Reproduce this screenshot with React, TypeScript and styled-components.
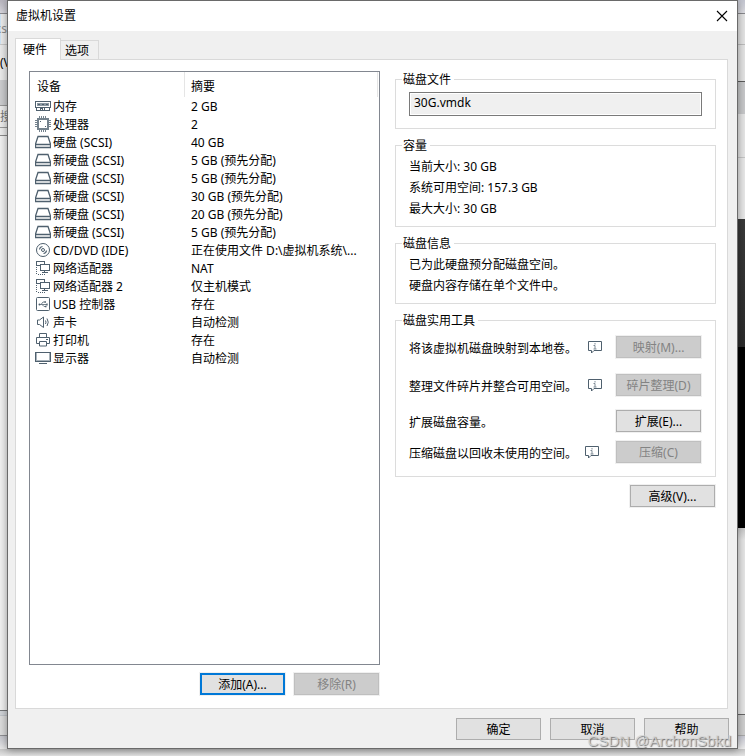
import React from "react";
import styled, { createGlobalStyle } from "styled-components";

const GlobalStyle = createGlobalStyle`
  * { box-sizing: border-box; }
  body {
    margin: 0;
    background: #f6f6f6;
    color: #000;
    font-family: "Noto Sans", "Noto Sans CJK SC", sans-serif;
    font-size: 12px;
    line-height: 16px;
  }
  button, input { font: inherit; color: inherit; }
`;

const Page = styled.div`
  position: relative;
  display: flex;
  flex-direction: column;
  min-height: 100vh;
`;

const Desktop = styled.div`
  flex: 1;
  display: flex;
`;

const Strip = styled.div`
  flex: 0 0 7px;
  display: flex;
  flex-direction: column;
  overflow: hidden;
`;

const Segment = styled.div<{ $h?: number; $bg: string; $line?: string; $ink?: string; $end?: boolean }>`
  flex: ${(p) => (p.$h ? `0 0 ${p.$h}px` : "1 1 0")};
  display: flex;
  align-items: center;
  justify-content: ${(p) => (p.$end ? "flex-end" : "flex-start")};
  overflow: hidden;
  background: ${(p) => p.$bg};
  border-bottom: ${(p) => (p.$line ? `1px solid ${p.$line}` : "0")};
  color: ${(p) => p.$ink ?? "#000"};
  white-space: nowrap;
`;

const BottomStrip = styled.div`
  height: 7px;
  background: linear-gradient(#c6c6c6, #e4e4e4);
`;

const Dialog = styled.main`
  flex: 1;
  position: relative;
  display: flex;
  flex-direction: column;
  min-width: 0;
  border: 1px solid #6a6a6a;
  background: #f0f0f0;
  box-shadow: 0 1px 8px rgba(0, 0, 0, 0.4);
`;

const TitleBar = styled.header`
  display: flex;
  align-items: center;
  justify-content: space-between;
  height: 30px;
  padding: 0 8px;
  background: #fff;
`;

const Title = styled.h1`
  margin: 0;
  font-size: 12px;
  font-weight: 400;
`;

const CloseButton = styled.button`
  display: grid;
  place-items: center;
  width: 14px;
  height: 14px;
  padding: 0;
  border: 0;
  background: none;
`;

const Tabs = styled.div`
  display: flex;
  align-items: flex-end;
  height: 28px;
  padding: 0 7px;
`;

const Tab = styled.button<{ $active?: boolean }>`
  position: relative;
  z-index: ${(p) => (p.$active ? 1 : 0)};
  width: ${(p) => (p.$active ? 46 : 38)}px;
  height: ${(p) => (p.$active ? 22 : 19)}px;
  margin-bottom: ${(p) => (p.$active ? -1 : 0)}px;
  padding: ${(p) => (p.$active ? "0 0 0 7px" : "2px 0 0 4px")};
  border: 1px solid #d9d9d9;
  border-bottom: 0;
  border-left-width: ${(p) => (p.$active ? 1 : 0)}px;
  background: ${(p) => (p.$active ? "#fff" : "#f0f0f0")};
  text-align: left;
`;

const Panel = styled.section`
  flex: 1;
  display: grid;
  grid-template-columns: 351fr 321fr;
  gap: 15px;
  margin: 0 9px 0 7px;
  padding: 11px 11px 13px 13px;
  border: 1px solid #d9d9d9;
  background: #fff;
`;

const Column = styled.div`
  display: flex;
  flex-direction: column;
  gap: 8px;
  min-width: 0;
`;

const ListBox = styled.div`
  flex: 1;
  padding-right: 1px;
  border: 1px solid #828790;
  background: #fff;
`;

const DeviceTable = styled.table`
  width: 100%;
  border-collapse: separate;
  border-spacing: 0;
  table-layout: fixed;
`;

const HeadCell = styled.th<{ $first?: boolean }>`
  width: ${(p) => (p.$first ? "155px" : "auto")};
  height: 25px;
  padding: 5px 0 0 ${(p) => (p.$first ? 7 : 6)}px;
  border-right: 1px solid #e5e5e5;
  font-weight: 400;
  text-align: left;
`;

const Cell = styled.td<{ $first?: boolean }>`
  height: 18px;
  padding: ${(p) => (p.$first ? "0 0 0 5px" : "2px 0 0 6px")};
  overflow: hidden;
  white-space: nowrap;
`;

const DeviceName = styled.div`
  display: flex;
  align-items: center;
  gap: 2px;
  height: 18px;
`;

const NameText = styled.span`
  align-self: flex-end;
`;

const Icon = styled.svg`
  flex: none;
  display: block;
  width: 16px;
  height: 16px;
  fill: none;
  stroke: #4f606e;
  stroke-width: 1;
`;

const Actions = styled.div<{ $inset?: boolean }>`
  display: flex;
  justify-content: flex-end;
  gap: 9px;
  padding-right: ${(p) => (p.$inset ? 1 : 0)}px;
`;

const PushButton = styled.button<{ $primary?: boolean }>`
  flex: none;
  width: 85px;
  height: 22px;
  padding: 2px 0 0;
  border: ${(p) => (p.$primary ? "2px solid #0078d7" : "1px solid #adadad")};
  background: #e1e1e1;
  box-shadow: 0 0 0 1px #f0f0f0;
  &:disabled {
    border-color: #bfbfbf;
    background: #ccc;
    color: #838383;
  }
`;

const Group = styled.fieldset<{ $top: number; $bottom: number }>`
  margin: 0;
  min-width: 0;
  padding: ${(p) => p.$top}px 13px ${(p) => p.$bottom}px;
  border: 1px solid #dcdcdc;
`;

const Legend = styled.legend`
  height: 16px;
  margin-left: -7px;
  padding: 0 3px 0 1px;
  line-height: 18px;
`;

const FileInput = styled.input`
  display: block;
  width: 100%;
  height: 24px;
  padding: 0 4px 4px;
  border: 1px solid #7a7a7a;
  background: #f0f0f0;
  box-shadow: inset 0 0 0 1px #fff;
  outline: 0;
`;

const Line = styled.p`
  margin: 0;
  line-height: 21px;
`;

const Tool = styled.div<{ $h: number }>`
  display: flex;
  align-items: flex-start;
  height: ${(p) => p.$h}px;
  padding-right: 1px;
`;

const ToolText = styled.span`
  line-height: 25px;
  white-space: nowrap;
`;

const InfoIcon = styled.svg<{ $gap: number }>`
  flex: none;
  width: 14px;
  height: 13px;
  margin: 5px 0 0 ${(p) => p.$gap}px;
  fill: none;
  stroke: #4f606e;
`;

const Spacer = styled.span`
  flex: 1;
`;

const Footer = styled.footer`
  padding: 9px 8px 8px;
`;

const Watermark = styled.div`
  position: absolute;
  right: 14px;
  bottom: 6px;
  color: rgba(215, 215, 215, 0.8);
  font: 15px/18px "Liberation Sans", sans-serif;
  text-shadow: 1px 1px 1px rgba(80, 80, 80, 0.75);
  pointer-events: none;
`;

const MemoryIcon = () => (
  <Icon viewBox="0 0 16 16" shapeRendering="crispEdges">
    <path d="M.5 3.5h15v6h-15zM1.5 9.5v3h13v-3M5.5 12.5v-2h2v2M9.5 12v-2" />
    <path d="M2 6.500h12" strokeWidth="3" stroke="#8b98a2" />
    <path d="M3 6.500h2M7 6.500h2M11 6.500h2" />
  </Icon>
);

const CpuIcon = () => (
  <Icon viewBox="0 0 16 16" shapeRendering="crispEdges">
    <rect x="3" y="3" width="10" height="10" strokeWidth="2" stroke="#74828d" />
    <path
      stroke="#74828d"
      d="M4.500 0v2M6.500 0v2M8.500 0v2M10.500 0v2M4.500 14v2M6.500 14v2M8.500 14v2M10.500 14v2M0 4.500h2M0 6.500h2M0 8.500h2M0 10.500h2M14 4.500h2M14 6.500h2M14 8.500h2M14 10.500h2"
    />
    <path d="M5 5.500h1M10 10.500h1" />
  </Icon>
);

const DiskIcon = () => (
  <Icon viewBox="0 0 16 16">
    <path d="M3 2.500h10l2.500 7.500v3.500H.5V10zM.5 10.500h15" strokeWidth="1.300" />
  </Icon>
);

const DiscIcon = () => (
  <Icon viewBox="0 0 16 16">
    <circle cx="8" cy="8" r="6.500" />
    <circle cx="8" cy="8" r="1.500" />
    <path d="M4.500 7.500A3.500 3.500 0 0 1 7.500 4.500M11.500 8.500A3.500 3.500 0 0 1 8.500 11.500" strokeWidth="1.200" />
  </Icon>
);

const NetworkIcon = () => (
  <Icon viewBox="0 0 16 16" shapeRendering="crispEdges">
    <path d="M5.500 5.500h-4v-4h8v3M5.500 4.500h9v6h-9zM9.500 10.500v2M7 12.500h6" />
    <path d="M1.500 7v8M3 14.500h7" strokeDasharray="1 1" />
  </Icon>
);

const UsbIcon = () => (
  <Icon viewBox="0 0 16 16">
    <rect x="1.500" y="1.500" width="13" height="13" rx="1" />
    <path d="M4 8.500h8M6 8.500l2-2.500h2M7 8.500l2 2h2" stroke="#74828d" />
    <circle cx="4.500" cy="8.500" r="1" fill="#4f606e" stroke="none" />
    <path d="M9.500 6h1.500M10 10.500h1.500M12 7.500v2" strokeWidth="1.300" />
  </Icon>
);

const SoundIcon = () => (
  <Icon viewBox="0 0 16 16">
    <path d="M2.500 6v4.500h2l4 3V3l-4 3zM10.500 6.500q1 1.700 0 3.500M12 4.500q2.500 3.700 0 7.500" />
  </Icon>
);

const PrinterIcon = () => (
  <Icon viewBox="0 0 16 16">
    <path d="M4.500 5.500v-4h7v4M4.500 11.500h-3v-6h13v6h-3M4.500 9.500h7v4.500h-7zM11 7.500h2" />
  </Icon>
);

const DisplayIcon = () => (
  <Icon viewBox="0 0 16 16" shapeRendering="crispEdges">
    <path d="M.5 2.500h15v9H.5zM4 13.500h8" />
    <path d="M1 10.500h14M1.500 3v8M14.500 3v8" stroke="#a9b3bb" />
  </Icon>
);

const Info = ({ gap }: { gap: number }) => (
  <InfoIcon $gap={gap} viewBox="0 0 14 13" role="img" aria-label="信息">
    <path d="M.5 .5h13v9H6l-2.500 2.500V9.500h-3z" />
    <path d="M7 2v1.500M5.500 4.500H7V8M5.500 8h3" stroke="#7f8b95" />
  </InfoIcon>
);

const devices: [React.ComponentType, string, string][] = [
  [MemoryIcon, "内存", "2 GB"],
  [CpuIcon, "处理器", "2"],
  [DiskIcon, "硬盘 (SCSI)", "40 GB"],
  [DiskIcon, "新硬盘 (SCSI)", "5 GB (预先分配)"],
  [DiskIcon, "新硬盘 (SCSI)", "5 GB (预先分配)"],
  [DiskIcon, "新硬盘 (SCSI)", "30 GB (预先分配)"],
  [DiskIcon, "新硬盘 (SCSI)", "20 GB (预先分配)"],
  [DiskIcon, "新硬盘 (SCSI)", "5 GB (预先分配)"],
  [DiscIcon, "CD/DVD (IDE)", "正在使用文件 D:\\虚拟机系统\\..."],
  [NetworkIcon, "网络适配器", "NAT"],
  [NetworkIcon, "网络适配器 2", "仅主机模式"],
  [UsbIcon, "USB 控制器", "存在"],
  [SoundIcon, "声卡", "自动检测"],
  [PrinterIcon, "打印机", "存在"],
  [DisplayIcon, "显示器", "自动检测"],
];

export default function App() {
  return (
    <>
      <GlobalStyle />
      <Page>
        <Desktop>
          <Strip aria-hidden="true">
            <Segment $h={14} $bg="linear-gradient(#b7b4bd, #d9d8df)" $line="#8d8d92" />
            <Segment $h={31} $bg="linear-gradient(90deg, #cfe4f5 1px, #ececec 1px)" $line="#c9c9c9" $ink="#8c8c8c" $end>
              ks
            </Segment>
            <Segment $h={35} $bg="#ebebeb">(V</Segment>
            <Segment $h={26} $bg="#cccdcf" $line="#9a9a9a" />
            <Segment $h={22} $bg="#ececec" $line="#9a9a9a" $ink="#777">搜</Segment>
            <Segment $h={8} $bg="#ececec" $line="#8a8a8a" />
            <Segment $bg="#f1f1f1" $line="#747678" />
            <Segment $h={5} $bg="#d0d3d7" $line="#bfc3c8" />
            <Segment $h={20} $bg="#dcdcdc" $line="#8f8f93" />
            <Segment $h={13} $bg="linear-gradient(#c4c5cc, #e8e8e8)" />
          </Strip>
          <Dialog>
            <TitleBar>
              <Title>虚拟机设置</Title>
              <CloseButton type="button" aria-label="关闭">
                <svg width="12" height="12" viewBox="0 0 12 12" stroke="#000" strokeWidth="1.100">
                  <path d="M1 1l10 10M11 1L1 11" />
                </svg>
              </CloseButton>
            </TitleBar>
            <Tabs role="tablist">
              <Tab type="button" role="tab" aria-selected="true" $active>硬件</Tab>
              <Tab type="button" role="tab" aria-selected="false">选项</Tab>
            </Tabs>
            <Panel role="tabpanel">
              <Column>
                <ListBox>
                  <DeviceTable>
                    <thead>
                      <tr>
                        <HeadCell $first>设备</HeadCell>
                        <HeadCell>摘要</HeadCell>
                      </tr>
                    </thead>
                    <tbody>
                      {devices.map(([Glyph, name, summary], i) => (
                        <tr key={i}>
                          <Cell $first>
                            <DeviceName>
                              <Glyph />
                              <NameText>{name}</NameText>
                            </DeviceName>
                          </Cell>
                          <Cell>{summary}</Cell>
                        </tr>
                      ))}
                    </tbody>
                  </DeviceTable>
                </ListBox>
                <Actions $inset>
                  <PushButton type="button" $primary>添加(A)...</PushButton>
                  <PushButton type="button" disabled>移除(R)</PushButton>
                </Actions>
              </Column>
              <Column>
                <Group $top={5} $bottom={12}>
                  <Legend>磁盘文件</Legend>
                  <FileInput aria-label="磁盘文件" readOnly value="30G.vmdk" />
                </Group>
                <Group $top={3} $bottom={7}>
                  <Legend>容量</Legend>
                  <Line>当前大小: 30 GB</Line>
                  <Line>系统可用空间: 157.3 GB</Line>
                  <Line>最大大小: 30 GB</Line>
                </Group>
                <Group $top={3} $bottom={7}>
                  <Legend>磁盘信息</Legend>
                  <Line>已为此硬盘预分配磁盘空间。</Line>
                  <Line>硬盘内容存储在单个文件中。</Line>
                </Group>
                <Group $top={8} $bottom={13}>
                  <Legend>磁盘实用工具</Legend>
                  <Tool $h={38}>
                    <ToolText>将该虚拟机磁盘映射到本地卷。</ToolText>
                    <Info gap={11} />
                    <Spacer />
                    <PushButton type="button" disabled>映射(M)...</PushButton>
                  </Tool>
                  <Tool $h={36}>
                    <ToolText>整理文件碎片并整合可用空间。</ToolText>
                    <Info gap={11} />
                    <Spacer />
                    <PushButton type="button" disabled>碎片整理(D)</PushButton>
                  </Tool>
                  <Tool $h={31}>
                    <ToolText>扩展磁盘容量。</ToolText>
                    <Spacer />
                    <PushButton type="button">扩展(E)...</PushButton>
                  </Tool>
                  <Tool $h={22}>
                    <ToolText>压缩磁盘以回收未使用的空间。</ToolText>
                    <Info gap={8} />
                    <Spacer />
                    <PushButton type="button" disabled>压缩(C)</PushButton>
                  </Tool>
                </Group>
                <Actions $inset>
                  <PushButton type="button">高级(V)...</PushButton>
                </Actions>
              </Column>
            </Panel>
            <Footer>
              <Actions>
                <PushButton type="button">确定</PushButton>
                <PushButton type="button">取消</PushButton>
                <PushButton type="button">帮助</PushButton>
              </Actions>
            </Footer>
          </Dialog>
          <Strip aria-hidden="true">
            <Segment $h={14} $bg="linear-gradient(#c3c5d0, #dddde2)" $line="#88888c" />
            <Segment $h={31} $bg="#e4e4e4" $line="#bdbdbd" />
            <Segment $h={37} $bg="#e4e4e4" $line="#5c5c5c" />
            <Segment $h={32} $bg="#c7c8ca" />
            <Segment $h={44} $bg="#e6e6e6" $line="#c6c6c6" />
            <Segment $h={61} $bg="#e8e8e8" />
            <Segment $h={128} $bg="linear-gradient(#3a3a3a, #2a2a2a)" />
            <Segment $h={181} $bg="#000" />
            <Segment $bg="linear-gradient(#c8c8c8, #e6e6e6 12px)" $line="#666" />
            <Segment $h={21} $bg="#cfcfcf" $line="#aaa" />
            <Segment $h={13} $bg="linear-gradient(#c9cad4, #eee)" />
          </Strip>
        </Desktop>
        <BottomStrip />
        <Watermark>CSDN @ArchonSbkd</Watermark>
      </Page>
    </>
  );
}
